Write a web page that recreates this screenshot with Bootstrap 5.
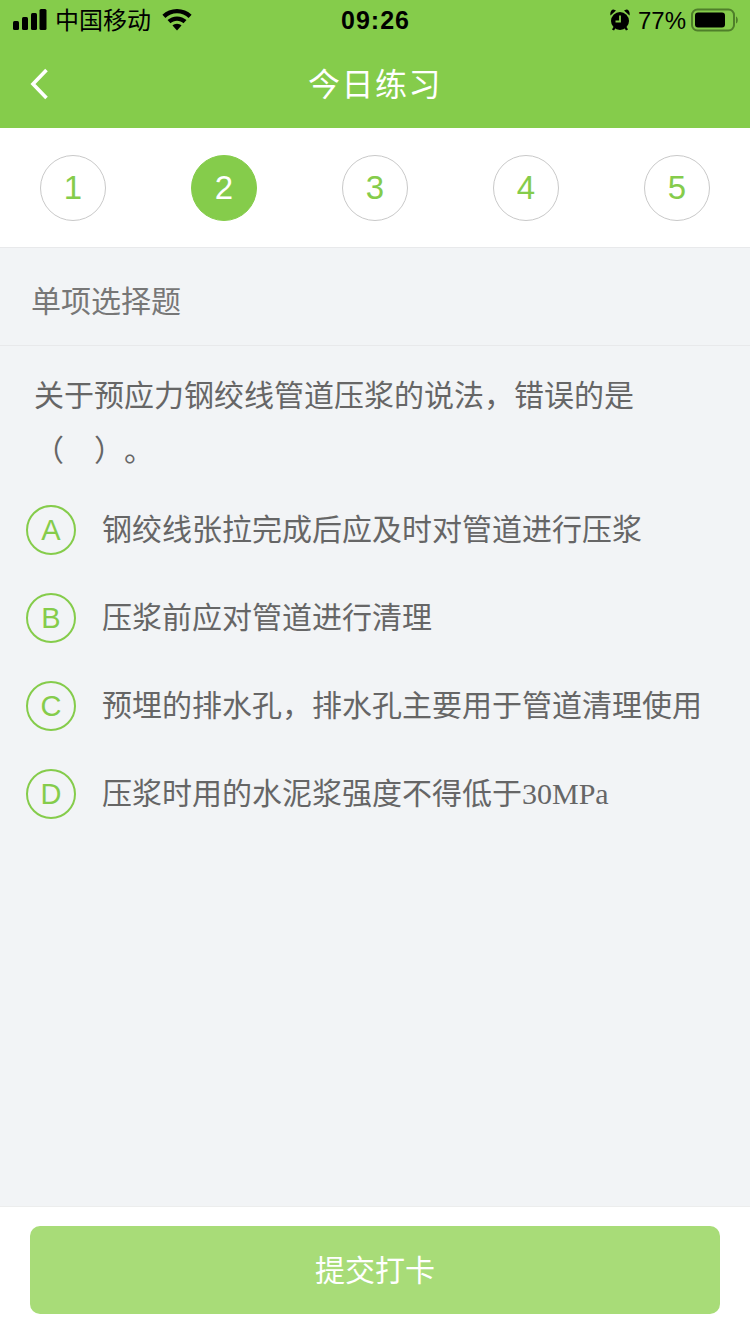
<!DOCTYPE html>
<html lang="zh-CN">
<head>
    <meta charset="UTF-8">
    <meta name="viewport" content="width=device-width, initial-scale=1.0">
    <title>今日练习</title>
    <link href="https://cdn.jsdelivr.net/npm/bootstrap@5.3.0/dist/css/bootstrap.min.css" rel="stylesheet">
    <style>
        body {
            background: #f2f4f6;
            font-family: "Liberation Sans", "Noto Sans CJK SC", sans-serif;
            color: #666;
        }
        .app-page {
            width: 750px;
            height: 1334px;
            overflow: hidden;
        }
        .app-head {
            height: 128px;
            background: #85cc4b;
        }
        .status-bar {
            height: 40px;
            padding: 0 12px 0 13px;
            color: #000;
        }
        .status-side {
            width: 300px;
        }
        .carrier {
            font-size: 24px;
            line-height: 40px;
            margin: 2px 11px 0 8px;
        }
        .clock {
            font-size: 25px;
            font-weight: 700;
            letter-spacing: 1px;
            margin-top: 2px;
        }
        .percent {
            font-size: 24px;
            margin: 2px 5px 0 8px;
        }
        .title-bar {
            height: 88px;
            padding-bottom: 1px;
        }
        .back-btn {
            left: 30px;
            top: 28px;
        }
        .page-title {
            color: #fff;
            font-size: 32px;
            letter-spacing: 1.5px;
            margin-top: 3px;
        }
        .step-bar {
            height: 120px;
            padding: 27px 40px 0;
            background: #fff;
            border-bottom: 1px solid #e8e9eb;
        }
        .step-dot {
            width: 66px;
            height: 66px;
            border: 1px solid #c9c9c9;
            color: #85cc4b;
            font-size: 33px;
        }
        .step-on {
            background: #85cc4b;
            border-color: #85cc4b;
            color: #fff;
        }
        .type-label {
            height: 98px;
            padding: 10px 0 0 31px;
            font-size: 30px;
            color: #777;
            border-bottom: 1px solid #e8e9eb;
        }
        .question {
            padding: 22px 34px 0;
            font-size: 30px;
            line-height: 55px;
            color: #666;
            text-spacing-trim: space-all;
        }
        .options {
            margin-top: 27px;
            padding-left: 26px;
            row-gap: 38px;
        }
        .opt-dot {
            width: 50px;
            height: 50px;
            border: 2px solid #85cc4b;
            color: #85cc4b;
            font-size: 29px;
            padding-top: 2px;
        }
        .opt-text {
            margin-left: 26px;
            font-size: 30px;
            line-height: 50px;
            color: #666;
            white-space: nowrap;
        }
        .latin {
            font-family: "Liberation Serif", serif;
        }
        .app-foot {
            height: 128px;
            padding: 19px 30px 0;
            background: #fff;
            border-top: 1px solid #eceded;
        }
        .submit-btn {
            height: 88px;
            background: #a8dc78;
            border: 0;
            border-radius: 10px;
            color: #fff;
            font-size: 30px;
        }
    </style>
</head>
<body>
    <div class="app-page d-flex flex-column">
        <!-- 顶部 -->
        <header class="app-head flex-shrink-0">
            <div class="status-bar d-flex align-items-center justify-content-between">
                <div class="status-side d-flex align-items-center">
                    <svg width="34" height="22" viewBox="0 0 34 22" fill="#000">
                        <rect x="0" y="12" width="6" height="9" rx="1.500"/>
                        <rect x="9" y="8" width="6" height="13" rx="1.500"/>
                        <rect x="18" y="4" width="6" height="17" rx="1.500"/>
                        <rect x="26.500" y="0" width="7" height="21" rx="1.500"/>
                    </svg>
                    <span class="carrier">中国移动</span>
                    <svg width="30" height="22" viewBox="0 0 30 22" fill="#000">
                        <path d="M15 0C9.300 0 4.200 2.200 .4 5.800l3 3.200C6.400 6.100 10.500 4.300 15 4.300s8.600 1.800 11.600 4.700l3-3.200C25.800 2.200 20.700 0 15 0z"/>
                        <path d="M15 7.400c-3.700 0-7 1.400-9.500 3.700l3 3.200c1.700-1.500 4-2.500 6.500-2.500s4.800 1 6.500 2.500l3-3.200C22 8.800 18.700 7.400 15 7.400z"/>
                        <path d="M15 14.800c-1.800 0-3.400.7-4.500 1.700l4.500 5 4.500-5c-1.100-1-2.700-1.700-4.500-1.700z"/>
                    </svg>
                </div>
                <span class="clock">09:26</span>
                <div class="status-side d-flex align-items-center justify-content-end">
                    <svg width="20" height="22" viewBox="0 0 20 22">
                        <circle cx="10" cy="12" r="9" fill="#000"/>
                        <path d="M10 6.500V12.500H5.500" fill="none" stroke="#85cc4b" stroke-width="1.800"/>
                        <path d="M.5 6.500 6 1.500 3.500 .5C1.300 .5-.3 3.500.5 6.500zM19.500 6.500 14 1.500 16.500 .5C18.700 .5 20.300 3.500 19.500 6.500z" fill="#000"/>
                        <path d="M4.500 18.500 3 21M15.500 18.500 17 21" stroke="#000" stroke-width="2.400"/>
                    </svg>
                    <span class="percent">77%</span>
                    <svg width="47" height="24" viewBox="0 0 47 24">
                        <rect x="1" y="1.500" width="42" height="21" rx="5.500" fill="none" stroke="#4f7f2a" stroke-width="2"/>
                        <rect x="4" y="4.500" width="30" height="15" rx="3" fill="#000"/>
                        <path d="M45 8.500c1.300.5 1.800 2 1.800 3.500s-.5 3-1.800 3.500z" fill="#4f7f2a"/>
                    </svg>
                </div>
            </div>
            <div class="title-bar position-relative d-flex align-items-center justify-content-center">
                <a href="#" class="back-btn position-absolute d-block lh-1">
                    <svg width="19" height="32" viewBox="0 0 19 32" class="d-block">
                        <path d="M16.500 2 3 16l13.500 14" fill="none" stroke="#fff" stroke-width="3.600"/>
                    </svg>
                </a>
                <div class="page-title">今日练习</div>
            </div>
        </header>

        <!-- 题号 -->
        <div class="step-bar flex-shrink-0 d-flex justify-content-between align-items-start">
            <div class="step-dot rounded-circle d-flex align-items-center justify-content-center">1</div>
            <div class="step-dot step-on rounded-circle d-flex align-items-center justify-content-center">2</div>
            <div class="step-dot rounded-circle d-flex align-items-center justify-content-center">3</div>
            <div class="step-dot rounded-circle d-flex align-items-center justify-content-center">4</div>
            <div class="step-dot rounded-circle d-flex align-items-center justify-content-center">5</div>
        </div>

        <!-- 题目 -->
        <main class="flex-grow-1">
            <div class="type-label d-flex align-items-center">单项选择题</div>
            <div class="question">关于预应力钢绞线管道压浆的说法，错误的是<br>（　）。</div>
            <div class="options d-flex flex-column">
                <div class="d-flex align-items-center">
                    <div class="opt-dot rounded-circle d-flex align-items-center justify-content-center flex-shrink-0">A</div>
                    <div class="opt-text">钢绞线张拉完成后应及时对管道进行压浆</div>
                </div>
                <div class="d-flex align-items-center">
                    <div class="opt-dot rounded-circle d-flex align-items-center justify-content-center flex-shrink-0">B</div>
                    <div class="opt-text">压浆前应对管道进行清理</div>
                </div>
                <div class="d-flex align-items-center">
                    <div class="opt-dot rounded-circle d-flex align-items-center justify-content-center flex-shrink-0">C</div>
                    <div class="opt-text">预埋的排水孔，排水孔主要用于管道清理使用</div>
                </div>
                <div class="d-flex align-items-center">
                    <div class="opt-dot rounded-circle d-flex align-items-center justify-content-center flex-shrink-0">D</div>
                    <div class="opt-text">压浆时用的水泥浆强度不得低于<span class="latin">30MPa</span></div>
                </div>
            </div>
        </main>

        <!-- 底部 -->
        <footer class="app-foot flex-shrink-0">
            <button type="button" class="btn submit-btn w-100">提交打卡</button>
        </footer>
    </div>
    <script src="https://cdn.jsdelivr.net/npm/bootstrap@5.3.0/dist/js/bootstrap.bundle.min.js"></script>
</body>
</html>
